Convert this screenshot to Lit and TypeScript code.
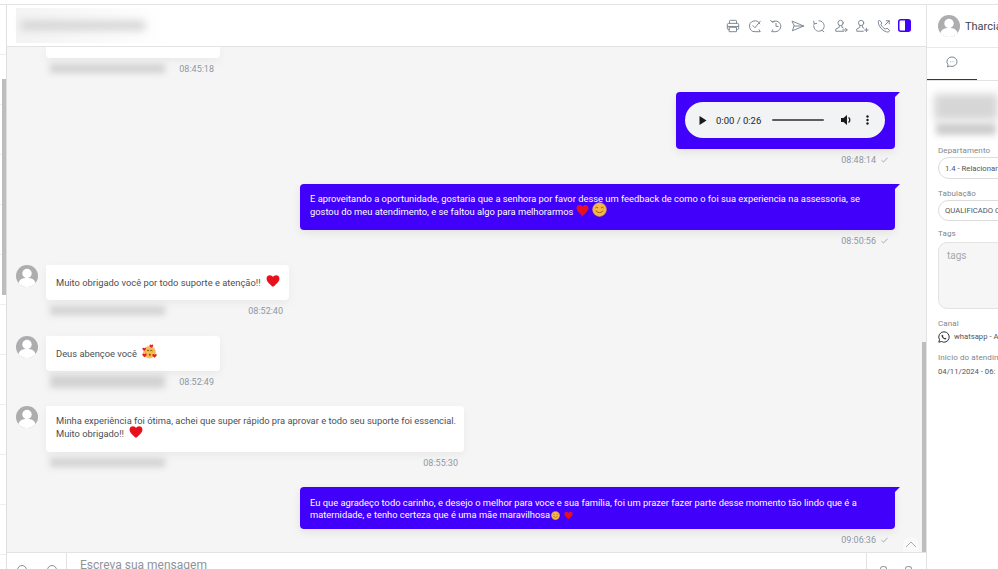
import { LitElement, html, css, svg } from "lit";
import { customElement } from "lit/decorators.js";

const heart = (s = 14) => html`<svg class="emo" width=${s} height=${s} viewBox="0 0 24 24"><path fill="#e8101c" d="M12 22C6 17 1 13 1 7.500 1 4 3.700 2 6.600 2 9 2 11 3.200 12 5c1-1.800 3-3 5.400-3C20.300 2 23 4 23 7.500 23 13 18 17 12 22z"/></svg>`;
const smile = (s = 15) => html`<svg class="emo" width=${s} height=${s} viewBox="0 0 24 24"><circle cx="12" cy="12" r="11" fill="#f5b942" stroke="#e59a3c"/><path d="M5.500 9.500q2-2.500 4 0M14.500 9.500q2-2.500 4 0M6 14q6 6 12 0" fill="none" stroke="#8a5a20" stroke-width="1.500"/></svg>`;
const love = html`<svg class="emo" width="15" height="15" viewBox="0 0 24 24"><circle cx="12" cy="13" r="10" fill="#f5bd4f"/><path d="M8 11q2-2 3.500 0M13 11q2-2 3.500 0" fill="none" stroke="#7a4a20" stroke-width="1.500"/><circle cx="12.500" cy="17" r="1.600" fill="#8a4a20"/><path fill="#e3202c" d="M15 6c-1.800-1.400-3-2.600-3-3.800C12 .7 14.200.3 15 1.900 15.800.3 18 .7 18 2.200 18 3.400 16.800 4.600 15 6zM3.500 11C1.700 9.600.5 8.400.5 7.200.5 5.700 2.700 5.300 3.500 6.900 4.300 5.300 6.500 5.700 6.500 7.200 6.500 8.400 5.300 9.600 3.500 11zM4 21c-2-1.500-3.500-3-3.500-4.300C.5 15 3 14.500 4 16.300 5 14.500 7.500 15 7.500 16.700 7.500 18 6 19.500 4 21zM20 22c-2-1.500-3.500-3-3.500-4.300 0-1.700 2.500-2.200 3.500-.4 1-1.800 3.500-1.300 3.500.4C23.500 19 22 20.500 20 22z"/></svg>`;
const avatar = (s = 22) => html`<svg class="avatar" width=${s} height=${s} viewBox="0 0 22 22"><circle cx="11" cy="11" r="11" fill="#adadaf"/><circle cx="11" cy="8.500" r="4.700" fill="#fff"/><path d="M2.500 18c1-4 4-5 8.500-5s7.500 1 8.500 5a11 11 0 0 1-17 0z" fill="#fff"/></svg>`;
const check = html`<svg class="check" width="7" height="6" viewBox="0 0 7 6"><path d="M.5 3.200 2.500 5 6.500.8" fill="none" stroke="#8d98a3" stroke-width=".8"/></svg>`;

const ic = (body: unknown) => html`<svg class="hicon" width="14" height="14" viewBox="0 0 16 16" fill="none" stroke="#7b8591" stroke-width="1.100" stroke-linecap="round" stroke-linejoin="round">${body}</svg>`;
const headIcons = [
  ic(svg`<path d="M4 5V2.500A1 1 0 0 1 5 1.500h6a1 1 0 0 1 1 1V5M4 12H3a1.500 1.500 0 0 1-1.500-1.500v-4A1.500 1.500 0 0 1 3 5h10a1.500 1.500 0 0 1 1.500 1.500v4A1.500 1.500 0 0 1 13 12h-1M1.800 8.500h12.400M4 9.500h8v5H4z"/>`),
  ic(svg`<path d="M13.500 5.500A6.200 6.200 0 1 0 8 14.500h6l-1.300-2.200M5.500 7.500 8 10l6-7.500"/>`),
  ic(svg`<path d="M3.800 3.200A6.200 6.200 0 1 1 8 14.500H3l1.300-2.200M1.800 1.500l1.800 2 2.700-.4M8 5v3.500h2.500"/>`),
  ic(svg`<path d="M1.500 2.500 14.500 8l-13 5.500L3.500 8zM3.500 8h11"/>`),
  ic(svg`<path stroke-dasharray="3.500 1.200" d="M8 2a6 6 0 1 1-5.500 3.500"/><path d="M2 2.500l.5 3 3-.5M11.500 13l2 1.500"/>`),
  ic(svg`<circle cx="7.500" cy="4.500" r="3"/><path d="M6 7.500v2L2 11.500V14h9M9 7.500v2l1.500.7M10 12.500h5M13 10.500l2 2-2 2"/>`),
  ic(svg`<circle cx="7" cy="4.500" r="3"/><path d="M5.500 7.500v2L2 11.500V14h7.500M8.500 7.500v2l1.500.8M13 10.500v4M11 12.500h4"/>`),
  ic(svg`<path d="M3 1.500 5.500 4.500 4.500 6.500c1 2 3 4 5 5l2-1 3 2.500-1.500 2C7.500 15 1 8.500 1.500 3zM9 7l5-5M10.500 2H14v3.500"/>`),
];

@customElement("app-root")
export class AppRoot extends LitElement {
  static styles = css`
    :host { display: block; width: 998px; height: 569px; overflow: hidden; background: #fff; font-family: Roboto, "Liberation Sans", sans-serif; color: #4a4f55; }
    .page { height: 569px; display: flex; flex-direction: column; }
    .topstrip { height: 4px; flex: none; border-bottom: 1px solid #e3e3e4; }
    .main { flex: 1; min-height: 0; display: flex; }
    .rail { width: 6px; flex: none; border-right: 1px solid #dfdfe0; background: repeating-linear-gradient(#fff 0 49px, #eee 49px 50px); position: relative; }
    .railthumb { position: absolute; left: 2px; right: 0; top: 74px; height: 216px; background: #bdbdbd; }
    .chat { width: 919px; flex: none; display: flex; flex-direction: column; min-width: 0; }
    .chead { height: 41px; flex: none; background: #fff; border-bottom: 1px solid #e2e3e4; display: flex; align-items: center; justify-content: space-between; padding: 0 15px 0 9px; }
    .namewrap { width: 153px; height: 35px; display: flex; align-items: center; padding-left: 5px; box-sizing: border-box; background: linear-gradient(90deg, #f3f3f3, #fff); }
    .namebar { width: 124px; height: 9px; background: #d2d2d2; filter: blur(4px); }
    .hicons { display: flex; gap: 7.500px; align-items: center; }
    .hicon, .panelicon { display: block; }
    .body { flex: 1; min-height: 0; background: #f5f5f6; position: relative; overflow: hidden; display: flex; flex-direction: column; padding-right: 31px; }
    .thumb { position: absolute; right: 0; width: 4px; top: 295px; bottom: 0; background: #bdbdbd; }
    .up { position: absolute; right: 7px; bottom: 0; width: 16px; height: 15px; display: flex; align-items: center; justify-content: center; background: #f9f9f9; border-radius: 50% 50% 0 0; }
    .in { display: grid; grid-template-columns: 30px auto; justify-content: start; padding-left: 9px; }
    .avatar { display: block; flex: none; }
    .bubble { background: #fff; border-radius: 0 4px 4px 4px; box-shadow: 0 3px 10px rgba(0,0,0,.05); font-size: 9.350px; line-height: 13px; padding: 11px 0 11px 10px; box-sizing: border-box; white-space: nowrap; }
    .bubble.in1 { border-radius: 0 0 4px 4px; width: 174px; height: 11px; padding: 0; }
    .bubble.w174 { width: 174px; height: 35px; }
    .bubble.w243 { width: 243px; height: 35px; }
    .bubble.w418 { width: 418px; height: 46px; padding-top: 8px; }
    .col { display: flex; flex-direction: column; }
    .col174 { width: 174px; }
    .meta { display: flex; justify-content: space-between; align-items: center; height: 21px; padding: 0 6px 0 4px; font-size: 9px; color: #8d98a3; }
    .blur { width: 115px; height: 9px; background: #d2d2d2; filter: blur(3px); }
    .blur.tall { height: 13px; }
    .emo { vertical-align: 3px; margin: -5px 0 -5px 3px; }
    .out { align-self: flex-end; display: flex; flex-direction: column; align-items: flex-end; }
    .gap13 { margin-top: 13px; }
    .gap14 { margin-top: 14px; }
    .gap15 { margin-top: 15px; }
    .obubble { position: relative; background: #4100fa; color: #fff; border-radius: 4px 0 4px 4px; font-size: 9.350px; line-height: 13px; box-sizing: border-box; box-shadow: 0 3px 10px rgba(0,0,0,.08); }
    .obubble::after { content: ""; position: absolute; top: 0; left: 100%; border-top: 5px solid #4100fa; border-right: 5px solid transparent; }
    .ometa { height: 21px; display: flex; align-items: center; gap: 5px; padding-right: 7px; font-size: 9px; color: #8d98a3; }
    .audio { width: 219px; height: 57px; padding: 10px 10px 11px 9px; }
    .pill { height: 36px; border-radius: 18px; background: #f1f3f4; display: flex; align-items: center; color: #1f1f1f; font-size: 9.500px; padding-left: 14px; }
    .time { margin-left: 9px; width: 52px; white-space: nowrap; }
    .track { width: 52px; height: 2px; background: #5d5d5d; border-radius: 1px; margin-left: 4px; }
    .vol { margin-left: 17px; display: block; }
    .dots { margin-left: 14px; display: block; }
    .wide { width: 595px; height: 46px; padding: 8px 10px; }
    .wide2 { height: 42px; padding: 10px 10px 0; line-height: 12px; }
    .wide2 .emo { margin-left: 1px; }
    .composer { height: 16px; flex: none; background: #fff; border-top: 1px solid #e3e3e4; display: flex; overflow: hidden; }
    .cbtns { width: 60px; flex: none; border-right: 1px solid #e3e3e4; display: flex; gap: 20px; padding: 12px 0 0 10px; box-sizing: border-box; }
    .cbtns i { width: 10px; height: 10px; border: 1px solid #8a8f96; border-radius: 50%; display: block; box-sizing: border-box; }
    .ph { flex: 1; padding: 5px 0 0 13px; font-size: 12px; color: #8f9499; line-height: 14px; }
    .csend { width: 60px; flex: none; border-left: 1px solid #e3e3e4; display: flex; gap: 18px; padding: 13px 0 0 13px; box-sizing: border-box; }
    .csend i { width: 7px; height: 8px; border: 1px solid #9a9ea4; border-bottom: 0; border-radius: 3px 3px 0 0; box-sizing: border-box; display: block; }
    .side { flex: 1; min-width: 0; border-left: 1px solid #e2e3e4; overflow: hidden; white-space: nowrap; display: flex; flex-direction: column; }
    .shead { height: 42px; flex: none; display: flex; align-items: center; gap: 5px; padding-left: 11px; font-size: 11px; color: #3f444a; }
    .tabs { height: 32px; flex: none; border-top: 1px solid #e8e8e8; border-bottom: 1px solid #e2e3e4; }
    .tab { width: 50px; height: 32px; box-sizing: border-box; border-bottom: 1px solid #3f1fa8; margin-bottom: -1px; display: flex; align-items: center; justify-content: center; padding-bottom: 4px; }
    .form { padding: 13px 0 0 11px; display: flex; flex-direction: column; font-size: 8px; color: #80868d; }
    .blurA { margin-left: -4px; height: 26px; background: #d6d6d6; filter: blur(4px); }
    .blurB { margin: 3px 0 0 -2px; height: 12px; width: 60px; background: #cdcdcd; filter: blur(3px); }
    .lab { line-height: 10px; letter-spacing: .1px; flex: none; }
    .labtop { margin-top: 11px; }
    .sel { height: 22px; width: 120px; flex: none; border: 1px solid #dcdcdc; border-radius: 11px; font-size: 7.700px; color: #50555b; display: flex; align-items: center; padding-left: 6px; box-sizing: border-box; margin: 1px 0 10px; }
    .sel.b { height: 21px; margin-bottom: 8px; }
    .tags { height: 67px; width: 120px; flex: none; box-sizing: border-box; background: #f6f6f6; border: 1px solid #e3e3e3; border-radius: 9px; margin: 3px 0 10px; padding: 7px 8px; font-size: 10px; color: #a5a9ae; }
    .canal { display: flex; align-items: center; gap: 4px; color: #50555b; height: 13px; margin: 1px 0 10px; font-size: 7.700px; }
    .canal svg { flex: none; }
    .date { color: #50555b; margin-top: 4px; font-size: 7.700px; }
  `;

  render() {
    return html`<div class="page">
      <div class="topstrip"></div>
      <div class="main">
        <div class="rail"><div class="railthumb"></div></div>
        <div class="chat">
          <div class="chead">
            <div class="namewrap"><div class="namebar"></div></div>
            <div class="hicons">
              ${headIcons}
              <svg class="panelicon" width="13" height="13" viewBox="0 0 13 13"><rect x=".75" y=".75" width="11.500" height="11.500" rx="2" fill="#fff" stroke="#4100fa" stroke-width="1.500"/><path d="M7 1h4a1 1 0 0 1 1 1v9a1 1 0 0 1-1 1H7z" fill="#4100fa"/></svg>
            </div>
          </div>
          <div class="body">
            <div class="in">
              <div></div>
              <div class="col col174">
                <div class="bubble in1"></div>
                <div class="meta"><div class="blur"></div><span>08:45:18</span></div>
              </div>
            </div>
            <div class="out gap13">
              <div class="obubble audio">
                <div class="pill">
                  <svg width="8" height="9" viewBox="0 0 8 9"><path d="M.5 0 7.500 4.500.5 9z" fill="#1a1a1a"/></svg>
                  <span class="time">0:00 / 0:26</span>
                  <div class="track"></div>
                  <svg class="vol" width="11" height="10" viewBox="0 0 11 10"><path d="M0 3h2.500L6 0v10L2.500 7H0z" fill="#1a1a1a"/><path d="M7.500 2.500a3 3 0 0 1 0 5" stroke="#1a1a1a" fill="none" stroke-width="1.300"/></svg>
                  <svg class="dots" width="3" height="10" viewBox="0 0 3 10"><circle cx="1.500" cy="1.500" r="1.200" fill="#1a1a1a"/><circle cx="1.500" cy="5" r="1.200" fill="#1a1a1a"/><circle cx="1.500" cy="8.500" r="1.200" fill="#1a1a1a"/></svg>
                </div>
              </div>
              <div class="ometa"><span>08:48:14</span>${check}</div>
            </div>
            <div class="out gap14">
              <div class="obubble wide">E aproveitando a oportunidade, gostaria que a senhora por favor desse um feedback de como o foi sua experiencia na assessoria, se gostou do meu atendimento, e se faltou algo para melhorarmos${heart(13)}${smile()}</div>
              <div class="ometa"><span>08:50:56</span>${check}</div>
            </div>
            <div class="in gap14">
              ${avatar()}
              <div class="col">
                <div class="bubble w243">Muito obrigado você por todo suporte e atenção!! ${heart(14)}</div>
                <div class="meta"><div class="blur"></div><span>08:52:40</span></div>
              </div>
            </div>
            <div class="in gap15">
              ${avatar()}
              <div class="col">
                <div class="bubble w174">Deus abençoe você ${love}</div>
                <div class="meta"><div class="blur tall"></div><span>08:52:49</span></div>
              </div>
            </div>
            <div class="in gap14">
              ${avatar()}
              <div class="col">
                <div class="bubble w418">Minha experiência foi ótima, achei que super rápido pra aprovar e todo seu suporte foi essencial.<br />Muito obrigado!! ${heart(14)}</div>
                <div class="meta"><div class="blur"></div><span>08:55:30</span></div>
              </div>
            </div>
            <div class="out gap14">
              <div class="obubble wide wide2">Eu que agradeço todo carinho, e desejo o melhor para voce e sua família, foi um prazer fazer parte desse momento tão lindo que é a maternidade, e tenho certeza que é uma mãe maravilhosa${smile(9)} ${heart(9)}</div>
              <div class="ometa"><span>09:06:36</span>${check}</div>
            </div>
            <div class="thumb"></div>
            <div class="up"><svg width="12" height="7" viewBox="0 0 12 7"><path d="M1 6 6 1l5 5" fill="none" stroke="#a9adb2"/></svg></div>
          </div>
          <div class="composer">
            <div class="cbtns"><i></i><i></i></div>
            <div class="ph">Escreva sua mensagem</div>
            <div class="csend"><i></i><i></i></div>
          </div>
        </div>
        <div class="side">
          <div class="shead">${avatar()}<span>Tharcia</span></div>
          <div class="tabs"><div class="tab">
            <svg width="12" height="12" viewBox="0 0 12 12" fill="none" stroke="#6f7a85" stroke-width=".9"><path d="M6 1a5 4.700 0 0 1 0 9.400c-.8 0-1.500-.1-2.200-.4L1.500 11l.5-2.300A4.700 4.700 0 0 1 6 1z"/><path d="M4 5.800h.5M5.800 5.800h.5M7.600 5.800h.5"/></svg>
          </div></div>
          <div class="form">
            <div class="blurA"></div>
            <div class="blurB"></div>
            <div class="lab labtop">Departamento</div>
            <div class="sel">1.4 - Relacionar</div>
            <div class="lab">Tabulação</div>
            <div class="sel b">QUALIFICADO C</div>
            <div class="lab">Tags</div>
            <div class="tags">tags</div>
            <div class="lab">Canal</div>
            <div class="canal">
              <svg width="12" height="12" viewBox="0 0 12 12" fill="none" stroke="#2c3036" stroke-width="1"><path d="M6 .8a5.200 5.200 0 1 1-2.600 9.700L.8 11.200l.7-2.500A5.200 5.200 0 0 1 6 .8z"/><path d="M4 3.500 3.500 4.500c.2 2 1.800 3.600 3.800 4l1.200-.7-1.200-1-.7.500c-.8-.4-1.300-.9-1.600-1.700l.5-.6z" fill="#2c3036" stroke="none"/></svg>
              <span>whatsapp - A</span>
            </div>
            <div class="lab">Inicio do atendim</div>
            <div class="date">04/11/2024 - 06:</div>
          </div>
        </div>
      </div>
    </div>`;
  }
}
